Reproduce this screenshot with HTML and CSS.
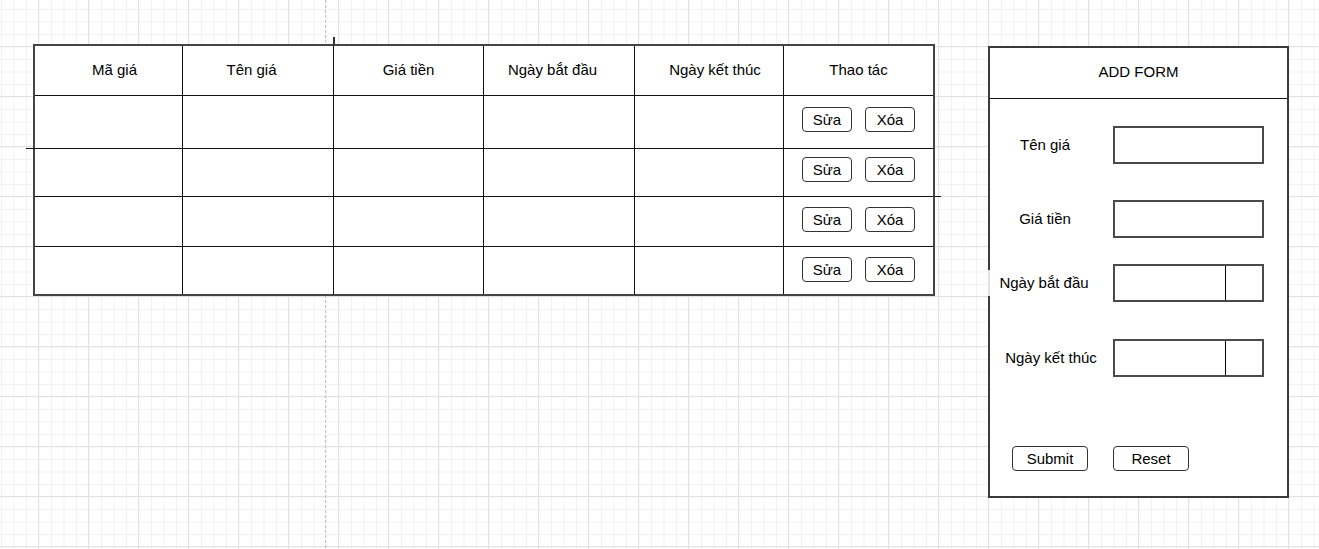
FILE: index.html
```html
<!DOCTYPE html>
<html lang="vi">
<head>
<meta charset="utf-8">
<title>Bảng giá</title>
<link rel="stylesheet" href="styles.css">
</head>
<body>
<div class="canvas">
  <div class="table">
    <div class="cell head shift-r">Mã giá</div>
    <div class="cell head shift-l">Tên giá</div>
    <div class="cell head">Giá tiền</div>
    <div class="cell head shift-l">Ngày bắt đầu</div>
    <div class="cell head shift-r">Ngày kết thúc</div>
    <div class="cell head end">Thao tác</div>

    <div class="cell"></div><div class="cell"></div><div class="cell"></div><div class="cell"></div><div class="cell"></div>
    <div class="cell end actions r1"><button class="btn" type="button">Sửa</button><button class="btn" type="button">Xóa</button></div>

    <div class="cell"></div><div class="cell"></div><div class="cell"></div><div class="cell"></div><div class="cell"></div>
    <div class="cell end actions r2"><button class="btn" type="button">Sửa</button><button class="btn" type="button">Xóa</button></div>

    <div class="cell"></div><div class="cell"></div><div class="cell"></div><div class="cell"></div><div class="cell"></div>
    <div class="cell end actions r3"><button class="btn" type="button">Sửa</button><button class="btn" type="button">Xóa</button></div>

    <div class="cell last"></div><div class="cell last"></div><div class="cell last"></div><div class="cell last"></div><div class="cell last"></div>
    <div class="cell last end actions r3"><button class="btn" type="button">Sửa</button><button class="btn" type="button">Xóa</button></div>

    <span class="tick tick-top"></span>
    <span class="tick tick-left"></span>
    <span class="tick tick-right"></span>
  </div>

  <form class="form">
    <div class="form-head">ADD FORM</div>
    <div class="form-body">
      <div class="field">
        <span class="label">Tên giá</span>
        <span class="input"></span>
      </div>
      <div class="field f2">
        <span class="label">Giá tiền</span>
        <span class="input"></span>
      </div>
      <div class="field f3">
        <span class="label cover">Ngày bắt đầu</span>
        <span class="input date"><span class="seg"></span><span class="pick"></span></span>
      </div>
      <div class="field f4">
        <span class="label shift">Ngày kết thúc</span>
        <span class="input date"><span class="seg"></span><span class="pick"></span></span>
      </div>
      <div class="form-actions">
        <button class="btn btn-wide" type="button">Submit</button>
        <button class="btn btn-wide" type="button">Reset</button>
      </div>
    </div>
  </form>
</div>
</body>
</html>
```

FILE: styles.css
```css
* {
  box-sizing: border-box;
}

html, body {
  margin: 0;
  height: 549px;
  overflow: hidden;
}

body {
  font-family: "Liberation Sans", Arial, sans-serif;
  font-size: 15px;
  color: #000;
  background-color: #fff;
  background-image:
    linear-gradient(#c4c4c4 60%, transparent 60%),
    linear-gradient(to right, #e2e2e2 1px, transparent 1px),
    linear-gradient(to bottom, #e2e2e2 1px, transparent 1px),
    linear-gradient(to right, #f2f2f2 1px, transparent 1px),
    linear-gradient(to bottom, #f2f2f2 1px, transparent 1px);
  background-size: 1px 5px, 50px 50px, 50px 50px, 12.5px 12.5px, 12.5px 12.5px;
  background-position: 325px 0, 38px 0, 0 46px, 1px 0, 0 9px;
  background-repeat: repeat-y, repeat, repeat, repeat, repeat;
}

.canvas {
  display: flex;
  align-items: flex-start;
  gap: 53px;
  padding: 44px 0 0 33px;
}

/* ---------- table ---------- */
.table {
  position: relative;
  display: grid;
  grid-template-columns: 148px 151px 150px 151px 149px 149px;
  grid-template-rows: 50px 53px 48px 50px 47px;
  border: 2px solid #444;
  background: #fff;
}

.cell {
  border-right: 1px solid #111;
  border-bottom: 1px solid #111;
}

.cell.end {
  border-right: none;
}

.cell.last {
  border-bottom: none;
}

.head {
  display: flex;
  align-items: center;
  justify-content: center;
  padding-bottom: 2px;
}

.shift-r {
  padding-left: 12px;
}

.shift-l {
  padding-right: 13px;
}

.actions {
  display: flex;
  align-items: flex-start;
  gap: 13px;
  padding-left: 18px;
}

.r1 {
  padding-top: 11px;
}

.r2 {
  padding-top: 8px;
}

.r3 {
  padding-top: 10px;
}

.btn {
  width: 50px;
  height: 25px;
  padding: 0;
  margin: 0;
  border: 1px solid #333;
  border-radius: 4px;
  background: #fff;
  font-family: "Liberation Sans", Arial, sans-serif;
  font-size: 15px;
  color: #000;
  line-height: 23px;
  text-align: center;
}

.tick {
  position: absolute;
  background: #333;
}

.tick-top {
  left: 298px;
  top: -9px;
  width: 2px;
  height: 9px;
}

.tick-left {
  left: -9px;
  top: 102px;
  width: 9px;
  height: 1px;
  background: #111;
}

.tick-right {
  left: 900px;
  top: 150px;
  width: 6px;
  height: 1px;
  background: #111;
}

/* ---------- form ---------- */
.form {
  width: 301px;
  height: 452px;
  margin-top: 2px;
  border: 2px solid #3a3a3a;
  background: #fff;
  display: flex;
  flex-direction: column;
}

.form-head {
  height: 51px;
  border-bottom: 1px solid #111;
  display: flex;
  align-items: center;
  justify-content: center;
  padding-bottom: 3px;
}

.form-body {
  display: flex;
  flex-direction: column;
  padding-top: 27px;
}

.field {
  display: grid;
  grid-template-columns: 110px 151px;
  column-gap: 13px;
  align-items: center;
  height: 38px;
}

.f2 {
  margin-top: 36px;
}

.f3 {
  margin-top: 26px;
}

.f4 {
  margin-top: 37px;
}

.label {
  text-align: center;
  padding-bottom: 2px;
}

.label.shift {
  padding-left: 12px;
}

.label.cover {
  margin-left: -2px;
  height: 26px;
  line-height: 26px;
  padding-bottom: 0;
  background: rgba(255, 255, 255, 0.85);
}

.input {
  height: 38px;
  border: 2px solid #4a4a4a;
  display: flex;
}

.seg {
  flex: 1;
}

.pick {
  width: 37px;
  border-left: 1px solid #000;
}

.form-actions {
  display: flex;
  gap: 25px;
  padding-left: 22px;
  margin-top: 69px;
}

.btn-wide {
  width: 76px;
}
```
